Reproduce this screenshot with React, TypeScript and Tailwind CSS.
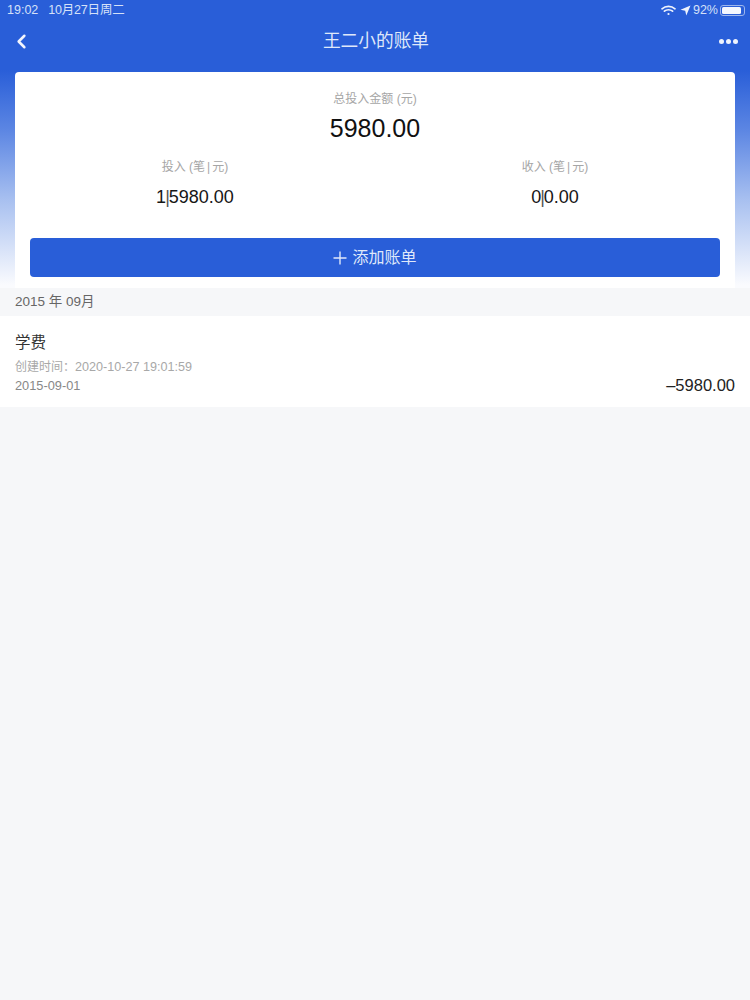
import { ChevronLeft } from 'lucide-react';

const FONT = "font-['Liberation_Sans','Noto_Sans_CJK_SC',sans-serif]";

function StatusBar() {
  return (
    <div className="flex h-[19px] items-center justify-between pl-[7px] pr-[5px] pt-[2px] text-[12.5px] leading-none text-[#d5e1f8]">
      <div className="flex items-center gap-[10px]">
        <span>19:02</span>
        <span className="tracking-[-0.2px]">10月27日周二</span>
      </div>
      <div className="flex items-center">
        <svg width="15" height="11" viewBox="0 0 15 11" fill="none" stroke="#eef3fd" strokeWidth="1.7" strokeLinecap="round">
          <path d="M1 3.8C4.6 .6 10.4 .6 14 3.8" />
          <path d="M3.4 6.2C5.7 4.3 9.3 4.3 11.6 6.2" />
          <circle cx="7.5" cy="9" r="1.1" fill="#eef3fd" stroke="none" />
        </svg>
        <svg className="ml-[4px]" width="11" height="11" viewBox="0 0 11 11" fill="#eef3fd">
          <path d="M10.5 .5 6.3 10.5 5.2 5.8 .5 4.7Z" />
        </svg>
        <span className="ml-[2px] text-[12.5px]">92%</span>
        <div className="ml-[2px] flex h-[11px] w-[25px] items-center rounded-[3px] border border-[#9db6ec] p-[1px]">
          <div className="h-full w-[90%] rounded-[1.5px] bg-[#f4f7fe]" />
        </div>
      </div>
    </div>
  );
}

function NavBar() {
  return (
    <div className="flex h-[44px] items-center justify-between pl-[10px] pr-[12px] text-white">
      <ChevronLeft size={23} strokeWidth={2.6} className="text-[#f2f5fd]" />
      <h1 className="pt-[2px] text-[17.7px] font-normal leading-none text-[#dfe8fa]">王二小的账单</h1>
      <div className="flex w-[19px] justify-between">
        <span className="size-[5px] rounded-full bg-[#eef3fd]" />
        <span className="size-[5px] rounded-full bg-[#eef3fd]" />
        <span className="size-[5px] rounded-full bg-[#eef3fd]" />
      </div>
    </div>
  );
}

function Stat({ label, count, amount }: { label: string; count: string; amount: string }) {
  return (
    <div className="flex flex-1 flex-col items-center">
      <p className="text-[12px] leading-[14px] text-[#a6a6a6]">
        {label} (笔<span className="mx-[2px]">|</span>元)
      </p>
      <p className="mt-[13px] text-[18px] leading-[20px] text-[#161616]">
        {count}
        <span className="mx-[-1px] font-light text-[#555]">|</span>
        {amount}
      </p>
    </div>
  );
}

export default function App() {
  return (
    <div className={`${FONT} min-h-[1000px] w-[750px] bg-[#f6f7f9]`}>
      <div className="h-[288px] bg-[linear-gradient(to_bottom,#295ed8_0px,#295ed8_70px,#5c86e3_130px,#a8c0f0_200px,#fafbfe_285px)]">
        <StatusBar />
        <NavBar />
        <div className="mx-[15px] mt-[9px] h-[216px] rounded-t-[4px] bg-white px-[15px] pt-[20px]">
          <div className="flex flex-col items-center">
            <p className="text-[12px] leading-[14px] text-[#a6a6a6]">总投入金额 (元)</p>
            <p className="mt-[8px] text-[25px] leading-[28px] text-[#111]">5980.00</p>
          </div>
          <div className="-mx-[15px] mt-[18px] flex">
            <Stat label="投入" count="1" amount="5980.00" />
            <Stat label="收入" count="0" amount="0.00" />
          </div>
          <button
            type="button"
            className="mt-[31px] flex h-[39px] w-full items-center justify-center gap-[5px] rounded-[4px] bg-[#295ed8] text-[16px] text-[#dfe8fa]"
          >
            <svg width="14" height="14" viewBox="0 0 14 14" stroke="#dfe8fa" strokeWidth="1.4">
              <path d="M7 .5v13M.5 7h13" />
            </svg>
            添加账单
          </button>
        </div>
      </div>
      <div className="flex h-[28px] items-center px-[15px] text-[13.5px] text-[#666]">2015 年 09月</div>
      <div className="h-[91px] bg-white px-[15px] pt-[17px]">
        <p className="text-[15.5px] leading-[20px] text-[#333]">学费</p>
        <p className="mt-[7px] text-[12px] leading-[14px] text-[#a8a8a8]">
          创建时间：<span className="text-[12.6px]">2020-10-27 19:01:59</span>
        </p>
        <div className="mt-[1px] flex items-end justify-between">
          <span className="mb-[2px] text-[12.8px] leading-[14px] text-[#888]">2015-09-01</span>
          <span className="text-[16.5px] leading-[20px] text-[#222]">–5980.00</span>
        </div>
      </div>
    </div>
  );
}
